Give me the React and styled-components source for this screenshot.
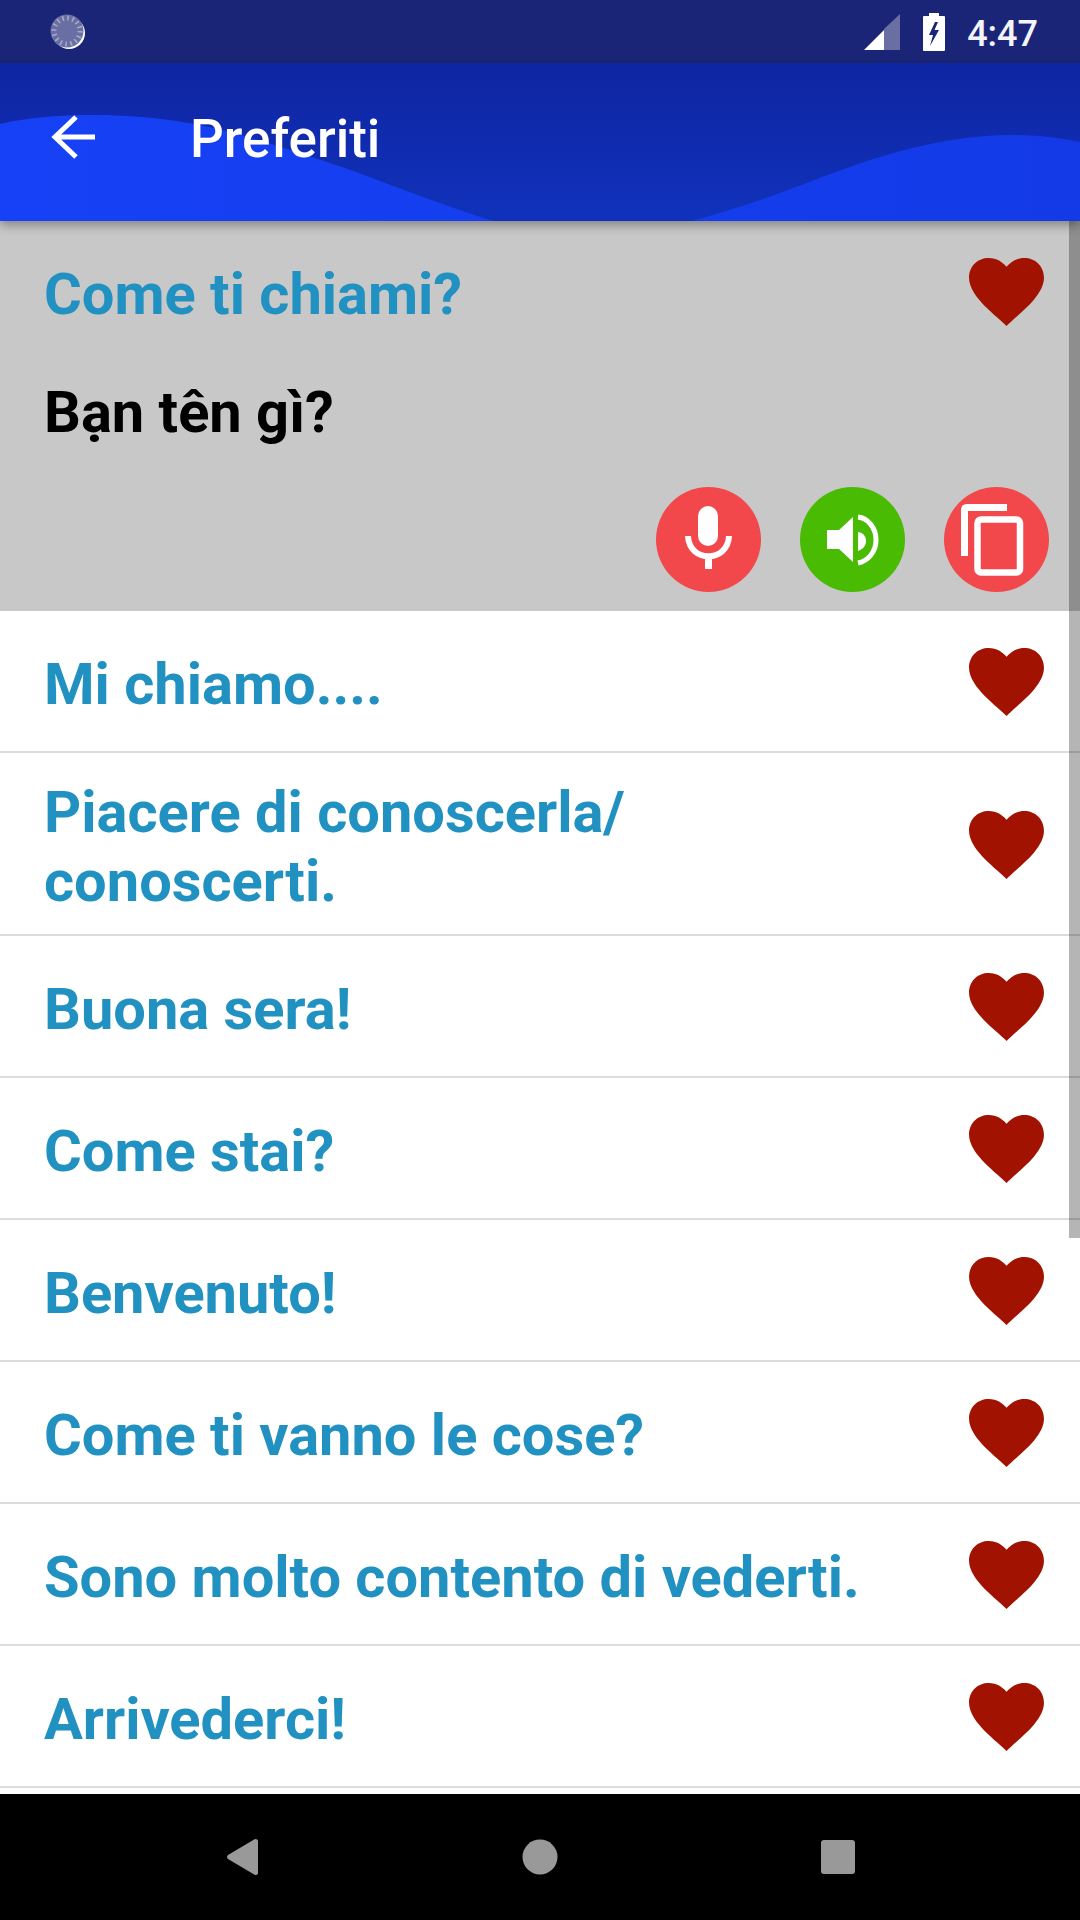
import React from "react";
import styled, { createGlobalStyle } from "styled-components";

const Global = createGlobalStyle`
  html, body { margin: 0; padding: 0; background: #fff; }
  * { box-sizing: border-box; }
`;

const Screen = styled.div`
  position: relative;
  width: 1080px;
  height: 1920px;
  display: flex;
  flex-direction: column;
  overflow: hidden;
  font-family: Roboto, "Liberation Sans", sans-serif;
`;

const StatusBar = styled.div`
  height: 63px;
  background: #1b2577;
  display: flex;
  align-items: center;
  padding: 0 42px 0 49px;
  color: #f4f5fa;
`;

const StatusRight = styled.div`
  margin-left: auto;
  display: flex;
  align-items: center;
`;

const Clock = styled.span`
  font-size: 36px;
  font-weight: 500;
  margin: 4px 0 0 22px;
  line-height: 1;
`;

const AppBar = styled.header`
  position: relative;
  z-index: 2;
  height: 158px;
  display: flex;
  align-items: center;
  padding: 0 0 10px 45px;
  background: linear-gradient(180deg, #0f25a2 0%, #1032bb 100%);
  box-shadow: 0 4px 10px rgba(0, 0, 0, 0.35);
  color: #fff;
`;

const Wave = styled.svg`
  position: absolute;
  left: 0;
  top: 0;
  width: 1080px;
  height: 158px;
`;

const BackIcon = styled.svg`
  position: relative;
  width: 54px;
  height: 54px;
  margin-right: 91px;
`;

const Title = styled.h1`
  position: relative;
  margin: 4px 0 0;
  font-size: 53px;
  font-weight: 500;
`;

const List = styled.div`
  flex: 1;
  min-height: 0;
  overflow: hidden;
  display: flex;
  flex-direction: column;
`;

const Selected = styled.section`
  flex: none;
  height: 390px;
  background: #c8c8c8;
  padding: 0 23px 19px 44px;
  display: flex;
  flex-direction: column;
`;

const RowHead = styled.div`
  height: 142px;
  padding-right: 13px;
  display: flex;
  align-items: center;
  justify-content: space-between;
`;

const HeartIcon = styled.svg`
  flex: none;
  width: 75px;
  height: 69px;
`;

const Row = styled.div`
  flex: none;
  min-height: 142px;
  padding: 20px 36px 19px 44px;
  display: flex;
  align-items: center;
  justify-content: space-between;
  border-bottom: 2px solid #dcdcdc;

  ${HeartIcon} {
    margin-top: 2px;
  }
`;

const Phrase = styled.div`
  max-width: 870px;
  padding-top: 5px;
  font-size: 57.8px;
  line-height: 68.5px;
  font-weight: 700;
  color: #2091c0;
`;

const WrapPhrase = styled(Phrase)`
  max-width: 640px;
`;

const Translation = styled.div`
  margin-top: 15px;
  font-size: 57.8px;
  line-height: 68.5px;
  font-weight: 700;
  color: #000;
`;

const Actions = styled.div`
  margin-top: auto;
  display: flex;
  justify-content: flex-end;
  gap: 39px;
  padding-right: 8px;
`;

const RoundButton = styled.button`
  width: 105px;
  height: 105px;
  padding: 0;
  border: 0;
  border-radius: 50%;
  background: ${(p) => (p.$green ? "#48bb02" : "#f2474b")};
  display: block;
`;

const Glyph = styled.svg`
  display: block;
  width: 105px;
  height: 105px;
`;

const NavBar = styled.nav`
  flex: none;
  height: 126px;
  background: #000;
  display: flex;
  align-items: center;
  justify-content: center;
  padding-bottom: 1px;
`;

const NavIcon = styled.svg`
  width: 36px;
  height: 38px;
  margin: 0 ${(p) => p.$m || 0}px;
`;

const Scrollbar = styled.div`
  position: absolute;
  z-index: 1;
  right: 0;
  top: 221px;
  width: 11px;
  height: 1017px;
  background: rgba(0, 0, 0, 0.29);
`;

const Heart = () => (
  <HeartIcon viewBox="0 0 76 70">
    <path
      d="M38 69 C30 60 0 40 0 20 C0 8 9 0 20 0 C28 0 34 4 38 9 C42 4 48 0 56 0 C67 0 76 8 76 20 C76 40 46 60 38 69 Z"
      fill="#a11300"
    />
  </HeartIcon>
);

const phrases = [
  "Mi chiamo....",
  "Piacere di conoscerla/ conoscerti.",
  "Buona sera!",
  "Come stai?",
  "Benvenuto!",
  "Come ti vanno le cose?",
  "Sono molto contento di vederti.",
  "Arrivederci!",
];

export default function App() {
  return (
    <Screen>
      <Global />
      <StatusBar>
        <svg width="38" height="38" viewBox="0 0 38 38">
          <circle cx="20" cy="20" r="16" fill="#fff" />
          <circle cx="18" cy="18" r="16.5" fill="#6a6fa3" />
          <circle cx="18" cy="18" r="13" fill="none" stroke="#a6a9c9" strokeWidth="5" strokeDasharray="1.6 3.5" />
        </svg>
        <StatusRight>
          <svg width="36" height="36" viewBox="0 0 36 36">
            <path d="M20 15 L36 0 V36 H20 Z" fill="#6a6fa3" />
            <path d="M0 36 L20 16 V36 Z" fill="#fff" />
          </svg>
          <svg width="22" height="38" viewBox="0 0 22 38" style={{ marginLeft: 23 }}>
            <path
              fillRule="evenodd"
              d="M6 0 H16 V3 H21 Q22 3 22 4 V37 Q22 38 21 38 H1 Q0 38 0 37 V4 Q0 3 1 3 H6 Z M12 9 L6 22 H10 L7 33 L16 17 H11.5 L15 9 Z"
              fill="#fff"
            />
          </svg>
          <Clock>4:47</Clock>
        </StatusRight>
      </StatusBar>

      <AppBar>
        <Wave viewBox="0 0 1080 158" preserveAspectRatio="none">
          <defs>
            <linearGradient id="lightWave" gradientUnits="userSpaceOnUse" x1="0" x2="1080" y1="0" y2="0">
              <stop offset="0" stopColor="#1741f6" />
              <stop offset="1" stopColor="#133ae6" />
            </linearGradient>
          </defs>
          <path
            d="M0 61 C30 54 60 52 93 52 C160 52 210 62 265 79 C300 90 330 100 345 105 C400 125 450 145 493 158 L0 158 Z M692 158 C720 150 750 141 780 130 C815 117 850 103 880 94 C925 80 970 72 1013 72 C1040 72 1060 75 1080 79 L1080 158 Z"
            fill="url(#lightWave)"
          />
        </Wave>
        <BackIcon viewBox="0 0 54 54">
          <path d="M50 27 H10 M31 7 L10 27 L31 47" fill="none" stroke="#fff" strokeWidth="5" />
        </BackIcon>
        <Title>Preferiti</Title>
      </AppBar>

      <List>
        <Selected>
          <RowHead>
            <Phrase>Come ti chiami?</Phrase>
            <Heart />
          </RowHead>
          <Translation>Bạn tên gì?</Translation>
          <Actions>
            <RoundButton aria-label="mic">
              <Glyph viewBox="0 0 105 105">
                <rect x="42" y="19" width="20" height="40" rx="10" fill="#fff" />
                <path d="M32 49 C33 76 72 76 73 49" fill="none" stroke="#fff" strokeWidth="6" />
                <rect x="49" y="68" width="7" height="14" fill="#fff" />
              </Glyph>
            </RoundButton>
            <RoundButton $green aria-label="speaker">
              <Glyph viewBox="0 0 105 105">
                <path d="M27 43 H39 L53 30 V75 L39 62 H27 Z" fill="#fff" />
                <path d="M58 45 C64 46 66 50 66 54 C66 59 63 62 58 64 Z" fill="#fff" />
                <path d="M58 30 C68 31 76 41 76 53 C76 65 68 74 58 76" fill="none" stroke="#fff" strokeWidth="5" />
              </Glyph>
            </RoundButton>
            <RoundButton aria-label="copy">
              <Glyph viewBox="0 0 105 105">
                <path d="M20.5 69 V23 Q20.5 20.5 23 20.5 H63" fill="none" stroke="#fff" strokeWidth="7" />
                <rect x="33.5" y="32.5" width="42.5" height="53" rx="3.5" fill="none" stroke="#fff" strokeWidth="6.5" />
              </Glyph>
            </RoundButton>
          </Actions>
        </Selected>
        {phrases.map((text) => {
          const Text = text.includes("/") ? WrapPhrase : Phrase;
          return (
            <Row key={text}>
              <Text>{text}</Text>
              <Heart />
            </Row>
          );
        })}
      </List>

      <NavBar>
        <NavIcon viewBox="0 0 36 38">
          <path d="M4 17 L31 1 Q34 1 34 3 V35 Q34 37 31 37 L4 21 Q2 19 4 17 Z" fill="#999" />
        </NavIcon>
        <NavIcon $m={262} viewBox="0 0 36 38">
          <circle cx="18" cy="19" r="17.5" fill="#999" />
        </NavIcon>
        <NavIcon viewBox="0 0 36 38">
          <rect x="1" y="2" width="34" height="34" rx="3" fill="#999" />
        </NavIcon>
      </NavBar>

      <Scrollbar />
    </Screen>
  );
}
